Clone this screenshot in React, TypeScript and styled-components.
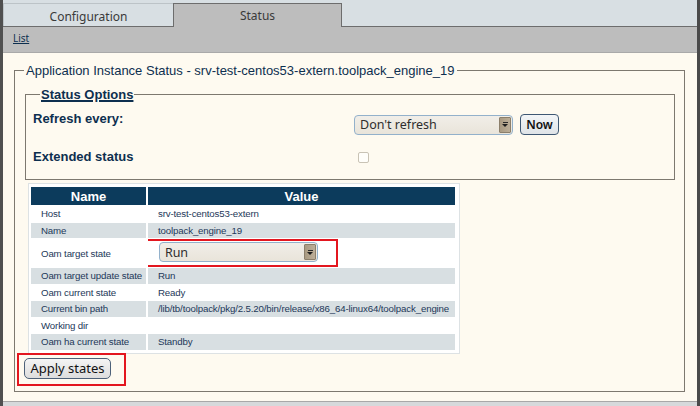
import styled, { createGlobalStyle } from "styled-components";

const GlobalStyle = createGlobalStyle`
  html, body {
    margin: 0;
    padding: 0;
  }
  body {
    background: #fefaf0;
    font-family: "Liberation Sans", Arial, sans-serif;
  }
`;

type Row = { name: string; value?: string; select?: string };

const rows: Row[] = [
  { name: "Host", value: "srv-test-centos53-extern" },
  { name: "Name", value: "toolpack_engine_19" },
  { name: "Oam target state", select: "Run" },
  { name: "Oam target update state", value: "Run" },
  { name: "Oam current state", value: "Ready" },
  {
    name: "Current bin path",
    value: "/lib/tb/toolpack/pkg/2.5.20/bin/release/x86_64-linux64/toolpack_engine",
  },
  { name: "Working dir", value: "" },
  { name: "Oam ha current state", value: "Standby" },
];

const App = () => {
  return (
    <Page>
      <GlobalStyle />
      <TabBar>
        <Tab>Configuration</Tab>
        <Tab $active>Status</Tab>
      </TabBar>
      <SubBar>
        <LinkText href="#">List</LinkText>
      </SubBar>
      <Content>
        <Outer>
          <OuterLegend>
            Application Instance Status - srv-test-centos53-extern.toolpack_engine_19
          </OuterLegend>
          <Inner>
            <InnerLegend>Status Options</InnerLegend>
            <OptionRow>
              <OptionLabel>Refresh every:</OptionLabel>
              <Controls>
                <FakeSelect $width={159}>
                  <span>Don't refresh</span>
                  <Arrow />
                </FakeSelect>
                <NowButton>Now</NowButton>
              </Controls>
            </OptionRow>
            <OptionRow $gap={14}>
              <OptionLabel>Extended status</OptionLabel>
              <Controls>
                <Check />
              </Controls>
            </OptionRow>
          </Inner>
          <TableBox>
            <StatusTable>
              <colgroup>
                <col style={{ width: 115 }} />
                <col style={{ width: 307 }} />
              </colgroup>
              <thead>
                <tr>
                  <Th>Name</Th>
                  <Th>Value</Th>
                </tr>
              </thead>
              <tbody>
                {rows.map((r, i) => (
                  <Tr key={r.name} $shade={i % 2 === 1}>
                    <Td>{r.name}</Td>
                    {r.select ? (
                      <Td $tight>
                        <Highlight>
                          <FakeSelect $width={159}>
                            <span>{r.select}</span>
                            <Arrow />
                          </FakeSelect>
                        </Highlight>
                      </Td>
                    ) : (
                      <Td>{r.value}</Td>
                    )}
                  </Tr>
                ))}
              </tbody>
            </StatusTable>
          </TableBox>
          <ApplyMark>
            <ApplyButton>Apply states</ApplyButton>
          </ApplyMark>
        </Outer>
      </Content>
      <Footer />
    </Page>
  );
};
export default App;

const Page = styled.div`
  height: 406px;
  display: flex;
  flex-direction: column;
  border-left: 3px solid #505050;
  border-right: 3px solid #4a4a4a;
  box-sizing: border-box;
`;

const TabBar = styled.div`
  height: 27px;
  box-sizing: border-box;
  background: #d8dfe3;
  border-bottom: 1px solid #6d6d6d;
  display: flex;
  align-items: flex-end;
`;

const Tab = styled.div<{ $active?: boolean }>`
  width: ${(p) => (p.$active ? "169px" : "170px")};
  height: ${(p) => (p.$active ? "24px" : "23px")};
  margin-bottom: ${(p) => (p.$active ? "-1px" : "0")};
  padding-top: ${(p) => (p.$active ? "0" : "2px")};
  box-sizing: border-box;
  border: 1px solid ${(p) => (p.$active ? "#6d6d6d" : "#bcc3c7")};
  border-bottom: none;
  border-right: ${(p) => (p.$active ? "1px solid #6d6d6d" : "none")};
  background: ${(p) => (p.$active ? "#bdbdbd" : "#d8dfe3")};
  font: 12px "Noto Sans", sans-serif;
  color: #3a3a3a;
  display: flex;
  align-items: center;
  justify-content: center;
`;

const SubBar = styled.div`
  background: #bdbdbd;
  border-bottom: 1px solid #a9a9a9;
  display: flex;
  align-items: center;
  padding: 0 0 4px 10px;
  box-sizing: border-box;
  height: 26px;
`;

const LinkText = styled.a`
  font: 10px "Noto Sans", sans-serif;
  color: #0d2f4f;
  text-decoration: underline;
`;

const Content = styled.div`
  flex: 1;
  background: #fefaf0;
  padding-top: 10px;
`;

const Outer = styled.fieldset`
  margin: 0 12px 0 11px;
  padding: 0 0 5px 0;
  border: 1px solid #7d786f;
  min-width: 0;
`;

const OuterLegend = styled.legend`
  margin-left: 9px;
  padding: 0 2px;
  font: 13px/15px "Liberation Sans", Arial, sans-serif;
  color: #0d2f4f;
`;

const Inner = styled.fieldset`
  margin: 9px 9px 0 10px;
  padding: 9px 7px 15px 7px;
  border: 1px solid #7d786f;
  min-width: 0;
`;

const InnerLegend = styled.legend`
  margin-left: 7px;
  padding: 0 1px;
  font: bold 13px/15px "Liberation Sans", Arial, sans-serif;
  color: #0d2f4f;
  text-decoration: underline;
  text-decoration-thickness: 2px;
  text-underline-offset: 1px;
`;

const OptionRow = styled.div<{ $gap?: number }>`
  display: grid;
  grid-template-columns: 321px 1fr;
  align-items: start;
  margin-top: ${(p) => p.$gap ?? 0}px;
`;

const OptionLabel = styled.div`
  font: bold 13px/15px "Liberation Sans", Arial, sans-serif;
  color: #0d2f4f;
`;

const Controls = styled.div`
  display: flex;
  align-items: center;
  padding-top: 3px;
`;

const FakeSelect = styled.div<{ $width: number }>`
  width: ${(p) => p.$width}px;
  height: 20px;
  box-sizing: border-box;
  border: 1px solid #93b1cb;
  border-radius: 4px;
  background: linear-gradient(#f1eee8, #e9e4da);
  display: flex;
  align-items: center;
  justify-content: space-between;
  padding: 0 1px 0 5px;
  font: 12.5px "Noto Sans", sans-serif;
  color: #2e2e2e;
`;

const Arrow = styled.div`
  width: 12px;
  height: 16px;
  box-sizing: border-box;
  background: linear-gradient(90deg, #a99a82, #bcae98);
  border: 1px solid #8c7f6b;
  border-radius: 1px;
  display: flex;
  flex-direction: column;
  align-items: center;
  justify-content: center;
  &::before {
    content: "";
    width: 5px;
    height: 1px;
    background: #2a2a2a;
    margin-bottom: 1px;
  }
  &::after {
    content: "";
    border-left: 3px solid transparent;
    border-right: 3px solid transparent;
    border-top: 3px solid #1e1e1e;
  }
`;

const NowButton = styled.button`
  margin-left: 7px;
  width: 39px;
  height: 21px;
  padding: 0;
  border: 1px solid #3e5773;
  border-radius: 4px;
  background: linear-gradient(#f3f5f7, #dfe3e7);
  font: 600 12px "Noto Sans", sans-serif;
  color: #111;
`;

const Check = styled.div`
  margin-left: 4px;
  width: 11px;
  height: 11px;
  box-sizing: border-box;
  border: 1px solid #c9c3b5;
  border-radius: 2px;
  background: #fffefa;
`;

const TableBox = styled.div`
  margin: 3px 0 0 13px;
  width: fit-content;
  border: 1px solid #dde2e4;
  background: #fff;
  padding: 0 2px 2px 0;
`;

const StatusTable = styled.table`
  table-layout: fixed;
  width: 428px;
  border-collapse: separate;
  border-spacing: 2px 1px;
  margin-top: 2px;
`;

const Th = styled.th`
  height: 18px;
  padding: 0;
  background: #0c3b5c;
  color: #fff;
  font: bold 13px "Liberation Sans", Arial, sans-serif;
  text-align: center;
`;

const Tr = styled.tr<{ $shade: boolean }>`
  background: ${(p) => (p.$shade ? "#d8dfe2" : "#fff")};
`;

const Td = styled.td<{ $tight?: boolean }>`
  height: 15.5px;
  padding: ${(p) => (p.$tight ? "0" : "0 0 0 10px")};
  font: 9.7px "Liberation Sans", Arial, sans-serif;
  letter-spacing: -0.15px;
  color: #1d3859;
  white-space: nowrap;
  overflow: hidden;
`;

const Highlight = styled.div`
  margin-left: -5px;
  width: 195px;
  box-sizing: border-box;
  border: 2px solid #e3161f;
  padding: 1px 0 3px 14px;
`;

const ApplyMark = styled.div`
  margin: -1px 0 0 2px;
  width: 109px;
  box-sizing: border-box;
  border: 2px solid #e3161f;
  padding: 3px 0 5px 5px;
`;

const ApplyButton = styled.button`
  width: 87px;
  height: 21px;
  padding: 0;
  border: 1px solid #4d6179;
  border-radius: 5px;
  background: linear-gradient(#f4f4f4, #dddddd);
  font: 13px "Noto Sans", sans-serif;
  color: #111;
`;

const Footer = styled.div`
  height: 4px;
  background: #d6d9db;
  border-top: 1px solid #a8a8a8;
`;
